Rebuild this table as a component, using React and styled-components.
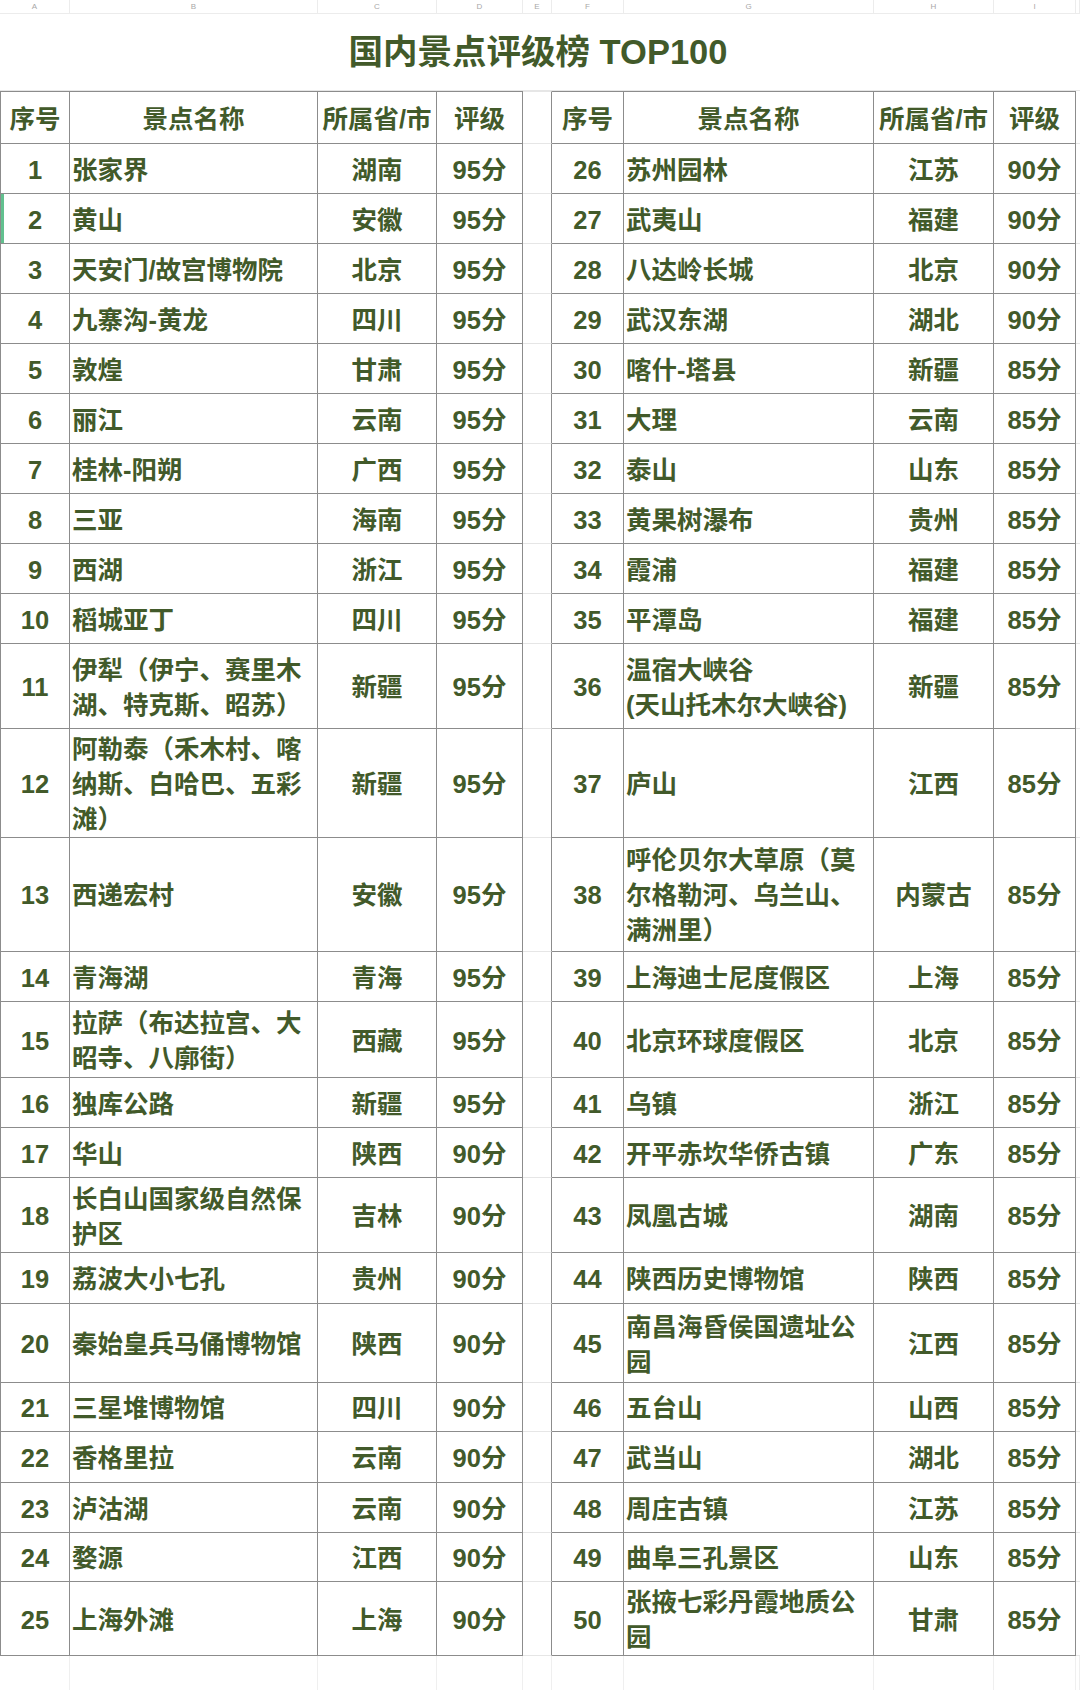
import React from "react";
import styled, { createGlobalStyle } from "styled-components";

const GREEN = "#425a2a";
const LINE = "#8c8c8c";
const GRID = "#e6e6e6";

// A B C D | E (gap) | F G H I | J sliver
const COLS = "70px 248px 119px 86px 29px 72px 250px 120px 82px 4px";
const LETTERS = ["A", "B", "C", "D", "E", "F", "G", "H", "I", ""];

const left = [
    ["1", "张家界", "湖南", "95分"],
    ["2", "黄山", "安徽", "95分"],
    ["3", "天安门/故宫博物院", "北京", "95分"],
    ["4", "九寨沟-黄龙", "四川", "95分"],
    ["5", "敦煌", "甘肃", "95分"],
    ["6", "丽江", "云南", "95分"],
    ["7", "桂林-阳朔", "广西", "95分"],
    ["8", "三亚", "海南", "95分"],
    ["9", "西湖", "浙江", "95分"],
    ["10", "稻城亚丁", "四川", "95分"],
    ["11", "伊犁（伊宁、赛里木湖、特克斯、昭苏）", "新疆", "95分"],
    ["12", "阿勒泰（禾木村、喀纳斯、白哈巴、五彩滩）", "新疆", "95分"],
    ["13", "西递宏村", "安徽", "95分"],
    ["14", "青海湖", "青海", "95分"],
    ["15", "拉萨（布达拉宫、大昭寺、八廓街）", "西藏", "95分"],
    ["16", "独库公路", "新疆", "95分"],
    ["17", "华山", "陕西", "90分"],
    ["18", "长白山国家级自然保护区", "吉林", "90分"],
    ["19", "荔波大小七孔", "贵州", "90分"],
    ["20", "秦始皇兵马俑博物馆", "陕西", "90分"],
    ["21", "三星堆博物馆", "四川", "90分"],
    ["22", "香格里拉", "云南", "90分"],
    ["23", "泸沽湖", "云南", "90分"],
    ["24", "婺源", "江西", "90分"],
    ["25", "上海外滩", "上海", "90分"],
];

const right = [
    ["26", "苏州园林", "江苏", "90分"],
    ["27", "武夷山", "福建", "90分"],
    ["28", "八达岭长城", "北京", "90分"],
    ["29", "武汉东湖", "湖北", "90分"],
    ["30", "喀什-塔县", "新疆", "85分"],
    ["31", "大理", "云南", "85分"],
    ["32", "泰山", "山东", "85分"],
    ["33", "黄果树瀑布", "贵州", "85分"],
    ["34", "霞浦", "福建", "85分"],
    ["35", "平潭岛", "福建", "85分"],
    ["36", "温宿大峡谷\n(天山托木尔大峡谷)", "新疆", "85分"],
    ["37", "庐山", "江西", "85分"],
    ["38", "呼伦贝尔大草原（莫尔格勒河、乌兰山、满洲里）", "内蒙古", "85分"],
    ["39", "上海迪士尼度假区", "上海", "85分"],
    ["40", "北京环球度假区", "北京", "85分"],
    ["41", "乌镇", "浙江", "85分"],
    ["42", "开平赤坎华侨古镇", "广东", "85分"],
    ["43", "凤凰古城", "湖南", "85分"],
    ["44", "陕西历史博物馆", "陕西", "85分"],
    ["45", "南昌海昏侯国遗址公园", "江西", "85分"],
    ["46", "五台山", "山西", "85分"],
    ["47", "武当山", "湖北", "85分"],
    ["48", "周庄古镇", "江苏", "85分"],
    ["49", "曲阜三孔景区", "山东", "85分"],
    ["50", "张掖七彩丹霞地质公园", "甘肃", "85分"],
];

// row heights as set in the sheet
const heights = [
    50, 50, 50, 50, 50, 50, 50, 50, 50, 50,
    85, 108, 115, 50, 76, 50, 50, 75, 51, 79,
    49, 51, 50, 49, 74,
];

const header = ["序号", "景点名称", "所属省/市", "评级"];

function Half({ data, first, marked, top }) {
    return (
        <>
            <Cell $first={first} $top={top} $marked={marked}>{data[0]}</Cell>
            <Cell $left={!top} $top={top}>{data[1]}</Cell>
            <Cell $top={top}>{data[2]}</Cell>
            <Cell $top={top}>{data[3]}</Cell>
        </>
    );
}

function App() {
    return (
        <>
            <GlobalStyle />
            <Sheet>
                <Row $h={14}>
                    {LETTERS.map((l, i) => (
                        <ColLabel key={i}>{l}</ColLabel>
                    ))}
                </Row>

                <Row $h={77}>
                    <Title>国内景点评级榜 TOP100</Title>
                    <Spare />
                </Row>

                <Row $h={53}>
                    <Half data={header} first top />
                    <Gap $top />
                    <Half data={header} top />
                    <Spare />
                </Row>

                {left.map((row, i) => (
                    <Row key={row[0]} $h={heights[i]}>
                        <Half data={row} first marked={i === 1} />
                        <Gap />
                        <Half data={right[i]} />
                        <Spare />
                    </Row>
                ))}

                <Row $h={50}>
                    {LETTERS.map((l, i) => (
                        <Blank key={i} />
                    ))}
                </Row>
            </Sheet>
        </>
    );
}

export default App;

const GlobalStyle = createGlobalStyle`
    html, body {
        margin: 0;
        padding: 0;
        background: #ffffff;
    }

    body {
        font-family: "Liberation Sans", "Noto Sans CJK SC", sans-serif;
    }
`;

const Sheet = styled.div`
    width: 1080px;
    display: flex;
    flex-direction: column;
    color: ${GREEN};
    font-weight: 700;
    overflow: hidden;
`;

const Row = styled.div`
    display: grid;
    grid-template-columns: ${COLS};
    height: ${(p) => p.$h}px;
    flex-shrink: 0;
`;

const ColLabel = styled.div`
    box-sizing: border-box;
    display: flex;
    align-items: center;
    justify-content: center;
    border-right: 1px solid #ececec;
    border-bottom: 1px solid #ececec;
    font-family: "Liberation Sans", sans-serif;
    font-weight: 400;
    font-size: 8px;
    color: #a8a8a8;
`;

const Title = styled.div`
    grid-column: 1 / span 9;
    box-sizing: border-box;
    display: flex;
    align-items: center;
    justify-content: center;
    border-bottom: 1px solid ${GRID};
    font-size: 34.5px;
    line-height: 40px;
`;

const Cell = styled.div`
    box-sizing: border-box;
    min-width: 0;
    display: flex;
    align-items: center;
    justify-content: ${(p) => (p.$left ? "flex-start" : "center")};
    padding: ${(p) => (p.$left ? "3px 2px 0" : "3px 0 0")};
    border-right: 1px solid ${LINE};
    border-bottom: 1px solid ${LINE};
    border-left: ${(p) => (p.$first ? `1px solid ${LINE}` : "none")};
    border-top: ${(p) => (p.$top ? `1px solid ${LINE}` : "none")};
    box-shadow: ${(p) => (p.$marked ? "inset 3px 0 0 #62c08f" : "none")};
    font-size: 25.5px;
    line-height: 35px;
    white-space: pre-line;
`;

const Gap = styled.div`
    box-sizing: border-box;
    border-right: 1px solid ${LINE};
    border-bottom: 1px solid ${GRID};
    border-top: ${(p) => (p.$top ? `1px solid ${GRID}` : "none")};
`;

const Spare = styled.div`
    box-sizing: border-box;
    border-bottom: 1px solid ${GRID};
`;

const Blank = styled.div`
    box-sizing: border-box;
    border-right: 1px solid #efefef;
    border-bottom: 1px solid #efefef;
`;
